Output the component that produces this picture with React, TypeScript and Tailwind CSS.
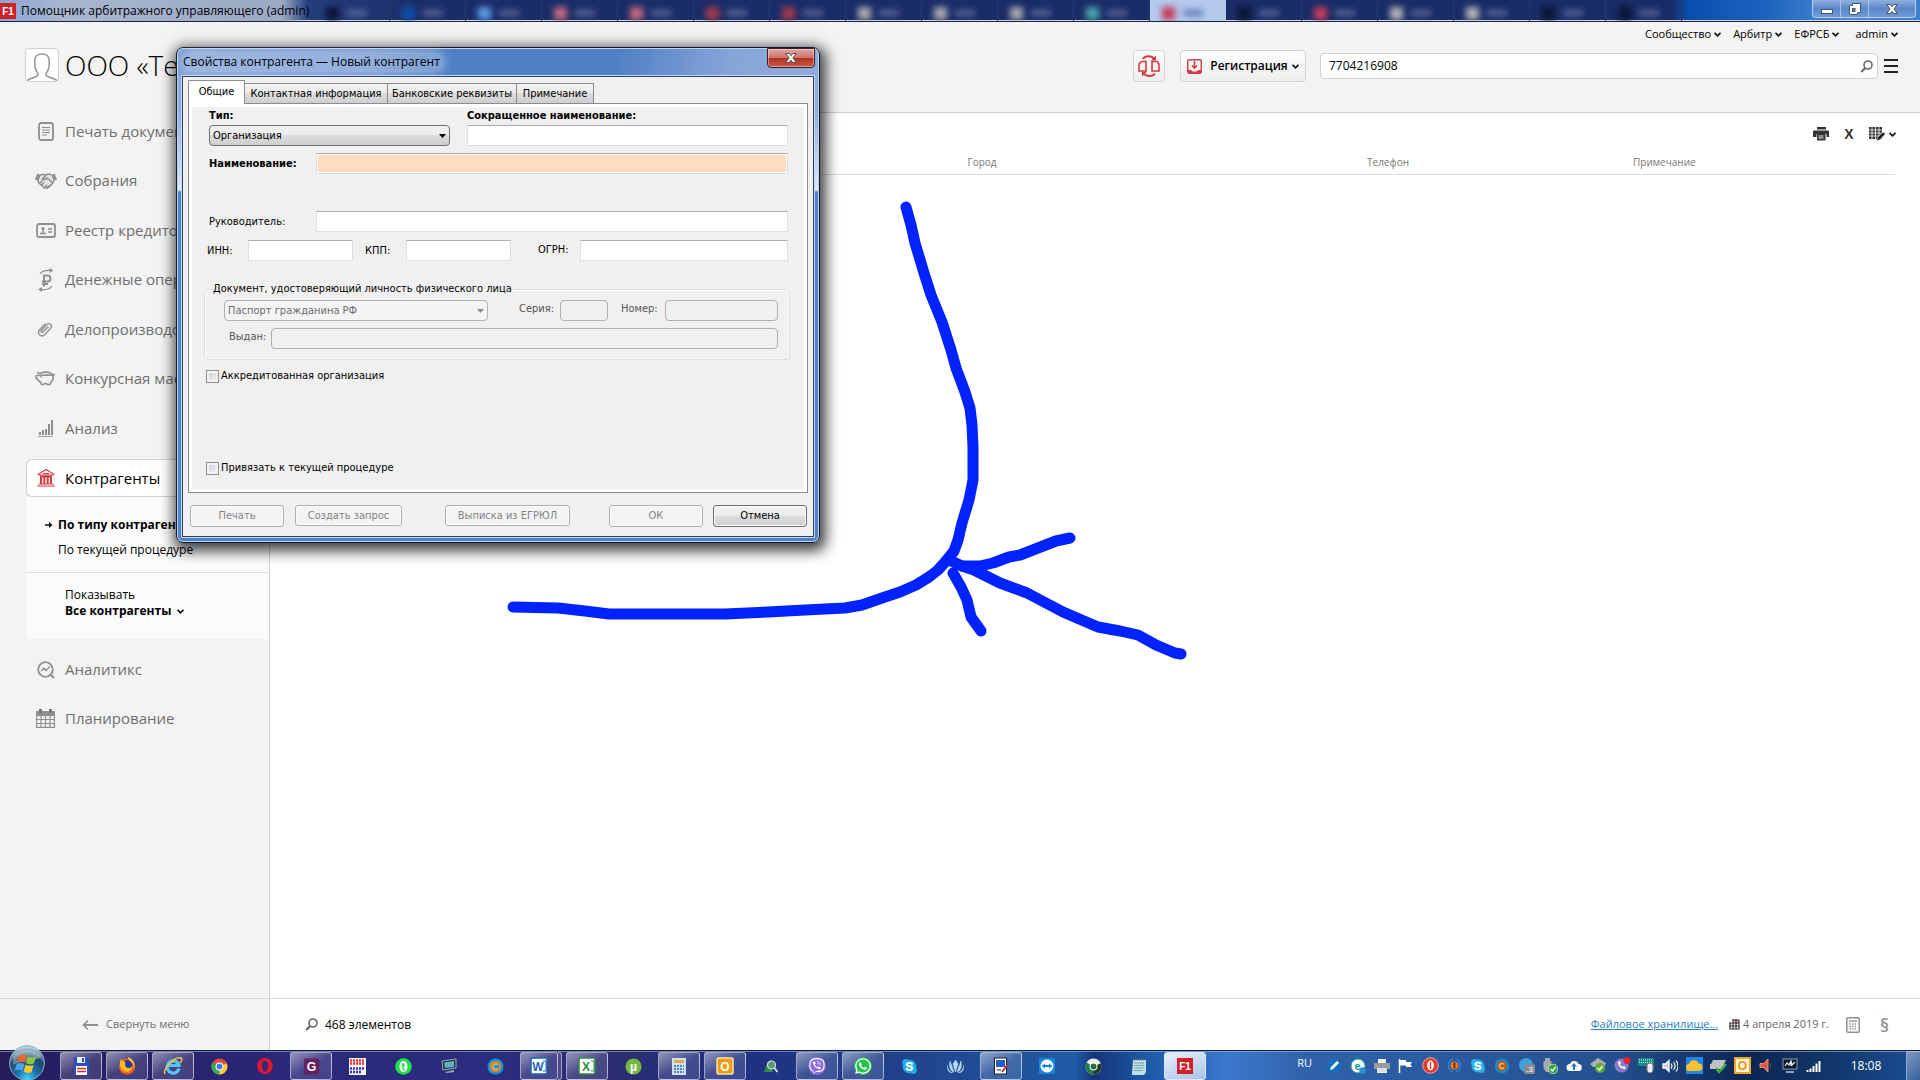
import React from "react";
import { FaHandshake, FaWhatsapp, FaViber, FaSkype } from "react-icons/fa";

const UI = "font-['Open_Sans','Noto_Sans',sans-serif]";
const DLG = "font-['DejaVu_Sans_Condensed','Open_Sans',sans-serif]";

type Kids = { children?: React.ReactNode };

function Ico({ w = 20, h = w, vb, children }: { w?: number; h?: number; vb?: string } & Kids) {
  return (
    <svg width={w} height={h} viewBox={vb ?? `0 0 ${w} ${h}`} fill="none" aria-hidden="true" className="shrink-0">
      {children}
    </svg>
  );
}

function Chevron() {
  return (
    <Ico w={7} h={5}>
      <path d="M0.5 0.8 L3.5 3.8 L6.5 0.8" stroke="#111" strokeWidth="1.7" />
    </Ico>
  );
}

function Lens({ size = 13 }: { size?: number }) {
  return (
    <Ico w={size} vb="0 0 13 13">
      <circle cx="8" cy="5" r="4" stroke="#666" strokeWidth="1.6" />
      <path d="M5.2 7.9 L1.2 12" stroke="#666" strokeWidth="2.2" />
    </Ico>
  );
}

/* ---------- title bar ---------- */

const browserTabs = [
  "bg-[#0a1535]", "bg-[#0d4fae]", "bg-[#5d9be6]", "bg-[#c4697b]", "bg-[#c4697b]", "bg-[#a33a4c]", "bg-[#a33a4c]",
  "bg-[#a9a7ae]", "bg-[#a9a7ae]", "bg-[#a9a7ae]", "bg-[#4ba5ac]", "bg-[#c43b5a]", "bg-[#0a1535]", "bg-[#c43b5a]",
  "bg-[#b3b1b5]", "bg-[#b3b1b5]", "bg-[#0a1535]", "bg-[#0a1535]",
];

function F1({ s = 16 }: { s?: number }) {
  return (
    <Ico w={s} vb="0 0 16 16">
      <rect width="16" height="16" fill="#cf2127" />
      <text x="8" y="12" textAnchor="middle" fontSize="10" fontWeight="bold" fontFamily="Liberation Sans" fill="#fff">F1</text>
    </Ico>
  );
}

function TitleBar() {
  return (
    <header className="flex h-[22px] shrink-0 items-stretch overflow-hidden border-b border-[#1c2340] bg-[linear-gradient(90deg,#3f69b5_0,#1b2d68_22%,#192c66_87%,#0a4fae_88%,#1d63bd_92%,#4a8ad4_96%,#3d7fd0_100%)] shadow-[inset_0_-1px_#cfd6e6]">
      <div className="flex w-[314px] shrink-0 items-center gap-[5px] bg-[linear-gradient(90deg,#8aa5d6_0,#a9b6d0_20%,#9ba8c4_90%,transparent_98%)] text-black">
        <F1 />
        <h1 className={`${UI} text-[12px] whitespace-nowrap`}>Помощник арбитражного управляющего (admin)</h1>
      </div>
      {browserTabs.map((c, i) => (
        <div key={i} className={`flex w-[76px] shrink items-end gap-2 px-3 pb-px ${i === 11 ? "bg-[#b5c9ec]" : "border-r border-[#24386f]"}`}>
          <span className={`size-[13px] blur-[3px] ${c}`} />
          <span className={`mb-1 h-[6px] w-5 blur-[3px] ${i === 11 ? "bg-[#5e7bb5]" : "bg-[#56669a]"}`} />
        </div>
      ))}
      <div className="mr-1 ml-auto flex h-[18px] rounded-b border border-t-0 border-[#b9cdec] bg-[linear-gradient(#8fb0df,#5c87c9_50%,#6e9ad8)]">
        <button aria-label="Свернуть" className="flex w-7 items-center justify-center border-r border-[#a8c0e6]">
          <Ico w={12} h={10}><rect x="0.5" y="5.5" width="11" height="4" fill="#fff" stroke="#45566f" /></Ico>
        </button>
        <button aria-label="Восстановить" className="flex w-7 items-center justify-center border-r border-[#a8c0e6]">
          <Ico w={12} h={12}>
            <path d="M3.5 0.5 H11.5 V9.5 H8.5 V11.5 H0.5 V2.5 H3.5Z" fill="#fff" stroke="#45566f" />
            <rect x="3.5" y="5.5" width="2.5" height="3" fill="#5c87c9" stroke="#45566f" />
          </Ico>
        </button>
        <button aria-label="Закрыть" className="flex w-[46px] items-center justify-center"><CrossGlyph /></button>
      </div>
    </header>
  );
}

function CrossGlyph() {
  return (
    <Ico w={12} h={10}>
      <path d="M0.7 0.5 H4 L6 2.8 L8 0.5 H11.3 L7.9 5 L11.3 9.5 H8 L6 7.2 L4 9.5 H0.7 L4.1 5Z" fill="#fff" stroke="#45464f" strokeWidth="0.9" />
    </Ico>
  );
}

/* ---------- sidebar ---------- */

const g = "#8f8f8f";
const navTop: { label: string; icon: React.ReactNode }[] = [
  { label: "Печать документов", icon: (
    <Ico w={16} h={19}><rect x="1" y="1" width="14" height="17" rx="2" stroke={g} strokeWidth="1.8" /><path d="M4 5.5h8M4 8h8M4 10.5h8M4 13h5" stroke={g} /></Ico>) },
  { label: "Собрания", icon: (
    <Ico w={22} h={18}><path d="M1 8 L3.500 2 M21 8 L18.500 2" stroke={g} strokeWidth="2.400" /><path d="M4.500 3.500 C7 1.500 9 2.500 11 3 C13 1.500 15.500 2 17.500 3.500 L19 8.500 L17.500 11.500 L12 16 H9.500 L3.500 10.500 L3 8.500Z" fill="#e2e2e2" stroke={g} strokeWidth="1.500" /><path d="M11 3 L7.500 7 C9 8.500 10.500 7.500 12 6 L18 11" stroke={g} strokeWidth="1.600" /><path d="M10 15l2-2M12 16.500l2.500-2.500M14 15l2.500-2M4.500 11l3-2.500M6.500 13l2.500-2.500" stroke={g} strokeWidth="1.600" /></Ico>) },
  { label: "Реестр кредиторов", icon: (
    <Ico w={20} h={15}><rect x="1" y="1" width="18" height="13" rx="2" stroke={g} strokeWidth="1.8" /><circle cx="7" cy="5.5" r="1.5" fill={g} /><path d="M4 10.5h6M7 6v4" stroke={g} strokeWidth="1.6" /><path d="M12 6h4M12 9h4" stroke={g} strokeWidth="1.3" /></Ico>) },
  { label: "Денежные операции", icon: (
    <Ico w={18} h={24}><path d="M3 6 C5 2.500 9 2 14 2.500 M15 18 C13 21.500 8 22 3 21.500" stroke={g} strokeWidth="1.200" /><path d="M12.500 0l4 2.500-4 2.500zM5 19l-4 2.500 4 2.500z" fill={g} /><path d="M7 18.500V7.500h3.500a2.800 2.800 0 010 6H5M5 16h6" stroke={g} strokeWidth="1.900" /></Ico>) },
  { label: "Делопроизводство", icon: (
    <Ico w={17} h={17} vb="0 0 17 17"><path d="M11.500 5.500 L6 11c-1 1-2.500-.3-1.500-1.500L10 3.500c2.500-2.200 6 .8 3.800 3.500L8 13.500c-3.500 3.500-8.500-.500-5.500-4.500L8.500 2.500" stroke={g} strokeWidth="1.400" /></Ico>) },
  { label: "Конкурсная масса", icon: (
    <Ico w={21} h={15}><path d="M2 1.500 L5 2.500 C9 .8 13 .8 16 2.500 L18.500 4 20 3.500 M17.500 4 C19 7 17.500 10 16 11 L15 13.500 H12 L11.500 12.500 H9.500 L9 13.500 H6.500 L5.500 11 C3.500 10.500 3 9 2.500 8 L1 7 V5 L2.500 4.500Z" stroke={g} strokeWidth="1.600" strokeLinejoin="round" /><path d="M9 4.500 C10.500 3.700 12 3.700 13.500 4.500" stroke={g} /><circle cx="6" cy="5.500" r=".9" fill={g} /></Ico>) },
  { label: "Анализ", icon: (
    <Ico w={15} h={17}><path d="M2 12v3M5 10v5M8 9v6M11 4v11M14 0v15" stroke={g} strokeWidth="2" /><path d="M0 16.500h15" stroke={g} strokeWidth=".8" /></Ico>) },
];

function NavRow({ label, icon, size }: { label: string; icon: React.ReactNode; size: string }) {
  return (
    <li>
      <a href="#" className={`flex items-center text-[#6f6f6f] ${size}`}>
        <span className="flex w-[39px] justify-center">{icon}</span>
        <span className="text-[15px] whitespace-nowrap">{label}</span>
      </a>
    </li>
  );
}

function Sidebar() {
  return (
    <nav className="flex w-[270px] shrink-0 flex-col border-r border-[#cfcfcf] bg-[#f3f3f3]">
      <ul className="flex h-[328px] flex-col justify-between pt-[7px] pl-[26px]">
        {navTop.map((n) => <NavRow key={n.label} size="h-6" {...n} />)}
      </ul>
      <div className="mt-[19px] flex-1 pl-[26px]">
        <a href="#" className="-mr-px flex h-[38px] items-center rounded-l-md border border-r-0 border-[#d3d3d3] bg-white text-black">
          <span className="flex w-[38px] justify-center">
            <Ico w={18} h={18}>
              <path d="M9 .5 L16.500 5 V6 H1.500 V5Z" stroke="#d63a42" strokeWidth="1.200" />
              <path d="M6 4.500h6" stroke="#d63a42" />
              <path d="M3 7.500h12M4 8v7M7.300 8v7M10.700 8v7M14 8v7" stroke="#d63a42" strokeWidth="2" />
              <path d="M1.500 15h15M0 17h18" stroke="#d63a42" strokeWidth="1.200" />
            </Ico>
          </span>
          <span className="text-[15px]">Контрагенты</span>
        </a>
        <div className="rounded-bl-md bg-[#fbfbfb] text-[12px] text-black">
          <div className="flex h-[76px] flex-col gap-[9px] border-b border-[#dcdcdc] pt-[20px]">
            <a href="#" className="flex items-center gap-[5px] pl-[19px] leading-4 font-bold whitespace-nowrap">
              <Ico w={8} h={8}><path d="M0 4h6" stroke="#111" strokeWidth="1.500" /><path d="M4 1l3.500 3L4 7z" fill="#111" /></Ico>
              По типу контрагентов
            </a>
            <a href="#" className="pl-[32px] leading-4">По текущей процедуре</a>
          </div>
          <div className="flex h-[66px] flex-col pt-[14px] pl-[39px]">
            <label htmlFor="show" className="leading-4">Показывать</label>
            <button id="show" className="flex items-center gap-[6px] leading-4 font-bold">Все контрагенты <Chevron /></button>
          </div>
        </div>
        <ul className="pt-[6px]">
          <NavRow size="h-[49px]" label="Аналитикс" icon={
            <Ico w={18} h={18}><circle cx="8.500" cy="8.500" r="7.300" stroke={g} strokeWidth="1.800" /><path d="M4 10l3-3 2 2.500L13 5.500" stroke={g} strokeWidth="1.300" /><path d="M13 13l4 4" stroke={g} strokeWidth="2.200" /></Ico>} />
          <NavRow size="h-[49px]" label="Планирование" icon={
            <Ico w={19} h={19}><path d="M0 2h19v5H0z" fill={g} /><path d="M4.500 0v4M14.500 0v4" stroke="#777" strokeWidth="3" /><path d="M.6 7v11.400h17.800V7M0 10.500h19M0 14.500h19M5 7v11M9.500 7v11M14 7v11" stroke={g} strokeWidth="1.200" /></Ico>} />
        </ul>
      </div>
      <button className="flex h-[52px] items-center gap-2 border-t border-[#dadada] pl-[82px] text-[11px] text-[#6f6f6f]">
        <Ico w={16} h={10}><path d="M2 5h14" stroke={g} strokeWidth="2" /><path d="M6 .5L1.500 5 6 9.500" stroke={g} strokeWidth="1.600" /></Ico>
        Свернуть меню
      </button>
    </nav>
  );
}

/* ---------- page header ---------- */

function PageHeader() {
  return (
    <div className="flex h-[90px] shrink-0 justify-between bg-[#f3f3f3] pr-[22px]">
      <div className="mt-[26px] flex h-[34px] items-center gap-[6px] pl-[25px]">
        <span className="flex h-[34px] w-[34px] items-end justify-center rounded border border-[#cfcfcf] bg-white">
          <Ico w={32} h={28}>
            <path d="M1 27.500 C5 24 11 25 12 22 C12.500 20 9 17 8.800 13 V7 C9 3 12 1 16 1 C20 1 23 3 23.200 7 V13 C23 17 19.500 20 20 22 C21 25 27 24 31 27.500" stroke="#9b9b9b" strokeWidth="1.600" />
          </Ico>
        </span>
        <h2 className="w-[112px] overflow-hidden text-[28px] leading-8 font-light whitespace-nowrap text-black">ООО «Те</h2>
      </div>
      <div className="flex w-[765px] flex-col gap-1">
        <div className="flex h-6 items-center justify-end gap-3 text-[11px] text-black">
          {["Сообщество", "Арбитр", "ЕФРСБ", "admin"].map((t, i) => (
            <button key={t} className={`flex items-center gap-[3px] ${i === 3 ? "ml-1" : ""}`}>{t} <Chevron /></button>
          ))}
        </div>
        <div className="flex items-center">
          <button aria-label="Обновить" className="flex h-8 w-8 items-center justify-center rounded border border-[#d4d4d4] bg-[linear-gradient(#fdfdfd,#ededed)]">
            <Ico w={22} h={22}>
              <path d="M3.500 6.500 H8 V16 H1 V9Z M14 6.500 H19 L21 9 V16 H14Z" stroke="#d63a42" strokeWidth="1.600" />
              <path d="M5 4 C7 .3 14 .3 16 4 M17 18.500 C15 21.800 8 21.800 6 18.500" stroke="#d63a42" strokeWidth="1.800" />
              <path d="M18 .5v5h-5zM4 21.500v-5h5z" fill="#d63a42" />
            </Ico>
          </button>
          <button className="ml-[15px] flex h-8 w-[126px] items-center justify-center gap-2 rounded border border-[#d4d4d4] bg-[linear-gradient(#fdfdfd,#ededed)] text-[12px] font-semibold text-black">
            <Ico w={15} h={15}>
              <rect x=".7" y=".7" width="13.600" height="13.600" rx="1.500" stroke="#d63a42" strokeWidth="1.400" />
              <path d="M7.500 2v7M5 6.500l2.500 2.500 2.500-2.500" stroke="#d63a42" strokeWidth="1.600" /><path d="M1 11h3l1.500 1.500h4L11 11h3v3H1z" fill="#d63a42" />
            </Ico>
            <span className="flex items-center gap-1">Регистрация <Chevron /></span>
          </button>
          <label className="ml-[14px] flex h-[26px] flex-1 items-center rounded border border-[#d0d0d0] bg-white pr-1 pl-2">
            <input aria-label="Поиск" defaultValue="7704216908" className="min-w-0 flex-1 bg-transparent text-[12px] text-black outline-none" />
            <Lens />
          </label>
          <button aria-label="Меню" className="ml-[6px] flex w-[14px] flex-col gap-[2px]">
            <span className="h-[2px] bg-[#222]" /><span className="mt-[2px] h-[2px] bg-[#222]" /><span className="mt-[2px] h-[2px] bg-[#222]" />
          </button>
        </div>
      </div>
    </div>
  );
}

/* ---------- main area ---------- */

function Main() {
  return (
    <main className="flex min-w-0 flex-1 flex-col border-t border-[#cdcdcd] bg-white">
      <div className="flex h-[42px] shrink-0 items-center justify-end gap-[14px] pr-[24px]">
        <button aria-label="Печать">
          <Ico w={16} h={14}><path d="M4 0h9v2.500H4z" fill="#333" /><path d="M1 3.500h14a1 1 0 011 1V10h-2.500V7h-10v3H0V4.500a1 1 0 011-1z" fill="#333" /><rect x="4" y="7" width="8.500" height="6.500" fill="#333" /><path d="M5.500 9h5M5.500 11h5" stroke="#fff" strokeWidth=".9" /></Ico>
        </button>
        <button aria-label="Экспорт в Excel" className="w-3 text-center font-['Liberation_Sans',sans-serif] text-[14px] leading-none font-bold text-[#333]">X</button>
        <button aria-label="Настроить таблицу" className="flex items-center gap-1">
          <Ico w={16} h={14}><path d="M0 0h13v12H0z" fill="#333" /><path d="M0 3h13M0 6h13M0 9h13M3 0v12M6.500 0v12M10 0v12" stroke="#fff" strokeWidth=".8" /><path d="M7.500 14l1-3.500L14 5l2.500 2L10.500 13z" fill="#222" stroke="#fff" strokeWidth=".6" /></Ico>
          <Chevron />
        </button>
      </div>
      <table className="mr-[25px] ml-[25px] table-fixed">
        <thead>
          <tr className="h-[19px] border-b border-[#dedede] align-top text-[10px] leading-[14px] text-[#777]">
            <td className="w-[30%]" />
            <th className="w-[25%] pl-[14px] font-normal">Город</th>
            <th className="w-[25%] pl-[26px] font-normal">Телефон</th>
            <th className="pl-[58px] text-left font-normal">Примечание</th>
          </tr>
        </thead>
      </table>
      <footer className="mt-auto flex h-[52px] items-center border-t border-[#dadada] pr-[31px] pl-[35px] text-[11px] text-black">
        <Lens />
        <span className="ml-[7px] text-[12px]">468 элементов</span>
        <a href="#" className="ml-auto text-[#2a80b9] underline">Файловое хранилище...</a>
        <span className="ml-[11px] flex items-center gap-[3px] text-[#666]">
          <Ico w={11} h={11}><rect x="5" y="1" width="5" height="4" fill="#f5b5b5" /><path d="M4 1h6v9H1V4M4 0v10M7 0v10M0 4h10M0 7h10" stroke="#333" strokeWidth="1.200" /></Ico>
          4 апреля 2019 г.
        </span>
        <button aria-label="Калькулятор" className="ml-[17px]">
          <Ico w={14} h={16}><rect x=".8" y=".8" width="12.400" height="14.400" rx="1" stroke={g} strokeWidth="1.500" /><path d="M3 4h8" stroke={g} strokeWidth="1.400" /><path d="M3.500 7h7M3.500 9.500h7M3.500 12h7" stroke={g} strokeWidth="1.400" strokeDasharray="1.400 1.200" /></Ico>
        </button>
        <span className="ml-5 text-[18px] leading-5 font-semibold text-[#8f8f8f]">§</span>
      </footer>
    </main>
  );
}

/* ---------- dialog ---------- */

const input = "h-[21px] min-w-0 rounded-[1px] border border-[#dbdfe6] border-t-[#a9acb2] bg-white px-1 outline-none";
const off = "h-[21px] min-w-0 rounded-sm border border-[#afafaf] bg-[#f0f0f0]";
const btn = "flex items-center justify-center rounded-[3px] border pt-px shadow-[inset_0_0_0_1px_#fbfbfb]";
const btnOff = "border-[#adb2b5] bg-[#f4f4f4] text-[#838383]";

function Pick({ id, text, disabled, className }: { id: string; text: string; disabled?: boolean; className: string }) {
  return (
    <span className={`relative flex h-[21px] items-center ${className}`}>
      <select id={id} disabled={disabled}
        className={`h-full w-full appearance-none rounded-sm border px-[3px] text-[11px] leading-none opacity-100 ${disabled ? "border-[#adb2b5] bg-[#f4f4f4] text-[#6d6d6d]" : "border-[#707070] bg-[linear-gradient(#f2f2f2,#ebebeb_49%,#dddddd_50%,#cfcfcf)] text-black"}`}>
        <option>{text}</option>
      </select>
      <span className="pointer-events-none absolute right-1">
        <Ico w={7} h={4}><path d="M0 0h7L3.500 4z" fill={disabled ? "#8a8a8a" : "#000"} /></Ico>
      </span>
    </span>
  );
}

function Check({ label }: { label: string }) {
  return (
    <label className="flex items-center gap-[2px]">
      <input type="checkbox" className="size-[13px] appearance-none border border-[#8e8f8f] bg-[linear-gradient(135deg,#c6cbd1,#f6f6f6)] shadow-[inset_0_0_0_2px_#f4f4f4]" />
      {label}
    </label>
  );
}

function Dialog() {
  return (
    <section role="dialog" aria-label="Свойства контрагента"
      className={`absolute top-[47px] left-[176px] flex w-[644px] flex-col rounded-[7px] border border-[#10182a] bg-[linear-gradient(#8eabdb_0,#8eabdb_60px,#e0e9f6_142px,#5181c5_144px)] px-[5px] pb-[5px] text-[11px] text-black shadow-[inset_0_0_0_1px_#bcd4f4,2px_4px_14px_4px_rgba(0,0,0,0.75)] ${DLG}`}>
      <div className="-mx-1 mt-px flex h-[27px] items-start justify-between rounded-t-md bg-[linear-gradient(100deg,#7e9fd6_0,#6f95d2_30%,#4f7fc4_42%,#4f7fc4_68%,#86a5d8_86%,#8eabdb_100%)] pl-[5px]">
        <h3 className={`mt-[3px] rounded-full bg-white/25 pr-1 text-[12px] leading-5 shadow-[0_0_8px_3px_rgba(255,255,255,0.25)] ${UI}`}>Свойства контрагента — Новый контрагент</h3>
        <button aria-label="Закрыть окно" className="-mt-px mr-[3px] flex h-[20px] w-[48px] items-center justify-center rounded-b-[4px] border border-[#431b22] bg-[linear-gradient(#e0a8a4,#cf7267_48%,#b0321f_50%,#c85a48_100%)] shadow-[inset_0_0_0_1px_rgba(255,255,255,0.4)]">
          <CrossGlyph />
        </button>
      </div>
      <div className="flex flex-col border border-[#2b4164] bg-[#f0f0f0] px-[5px] pt-[3px] pb-[9px] shadow-[0_0_0_1px_#c4daf6]">
        <div role="tablist" className="flex items-end">
          <button role="tab" aria-selected="true" className="relative z-10 -mb-px h-[24px] w-[57px] border border-b-0 border-[#898c95] bg-white pb-px">Общие</button>
          {[["Контактная информация", "w-[144px]"], ["Банковские реквизиты", "w-[130px]"], ["Примечание", "w-[78px]"]].map(([t, w]) => (
            <button key={t} role="tab" aria-selected="false" className={`-ml-px h-[20px] border border-b-0 border-[#898c95] bg-[linear-gradient(#f2f2f2,#ebebeb_49%,#dddddd_50%,#cfcfcf)] pt-px whitespace-nowrap ${w}`}>{t}</button>
          ))}
        </div>
        <div className="flex h-[390px] flex-col border border-[#898c95] bg-[#f0f0f0] pr-[19px] pl-[15px] shadow-[inset_0_0_0_3px_#fff]">
          <div className="mt-[4px] flex pl-[5px]">
            <div className="flex w-[258px] flex-col gap-px">
              <label htmlFor="type" className="leading-4 font-bold">Тип:</label>
              <Pick id="type" text="Организация" className="w-[241px]" />
            </div>
            <div className="flex flex-1 flex-col gap-px">
              <label htmlFor="short" className="leading-4 font-bold">Сокращенное наименование:</label>
              <input id="short" className={input} />
            </div>
          </div>
          <div className="mt-[7px] flex items-center pl-[5px]">
            <label htmlFor="name" className="w-[107px] pt-px font-bold">Наименование:</label>
            <input id="name" className="h-[21px] min-w-0 flex-1 border border-[#dbdfe6] border-t-[#a9acb2] bg-[#ffdbc2] shadow-[inset_0_0_0_1px_#fff]" />
          </div>
          <div className="mt-[37px] flex items-center pl-[5px]">
            <label htmlFor="head" className="w-[107px] pt-px">Руководитель:</label>
            <input id="head" className={`flex-1 ${input}`} />
          </div>
          <div className="mt-2 flex items-center pl-[3px]">
            <label htmlFor="inn" className="w-[41px] pt-[2px]">ИНН:</label>
            <input id="inn" className={`w-[105px] ${input}`} />
            <label htmlFor="kpp" className="ml-3 w-[41px] pt-[2px]">КПП:</label>
            <input id="kpp" className={`w-[105px] ${input}`} />
            <label htmlFor="ogrn" className="ml-[27px] w-[42px]">ОГРН:</label>
            <input id="ogrn" className={`flex-1 ${input}`} />
          </div>
          <fieldset className="-mr-[2px] mt-[20px] flex h-[79px] min-w-0 flex-col rounded border border-[#d5dfe5] pr-[11px] pl-[19px] shadow-[inset_0_0_0_1px_#fafafa]">
            <legend className="-ml-[13px] px-[2px] leading-4">Документ, удостоверяющий личность физического лица</legend>
            <div className="mt-[3px] flex items-center text-[#555]">
              <Pick id="doc" text="Паспорт гражданина РФ" disabled className="w-[264px]" />
              <label htmlFor="ser" className="ml-[31px] w-[41px] pb-[3px]">Серия:</label>
              <input id="ser" disabled className={`w-[48px] ${off}`} />
              <label htmlFor="num" className="ml-[13px] w-[44px] pb-[3px]">Номер:</label>
              <input id="num" disabled className={`flex-1 ${off}`} />
            </div>
            <div className="mt-[7px] flex items-center pl-[5px] text-[#555]">
              <label htmlFor="given" className="w-[42px] pb-[3px]">Выдан:</label>
              <input id="given" disabled className={`flex-1 ${off}`} />
            </div>
          </fieldset>
          <div className="mt-[8px] flex flex-col gap-[76px] pl-[2px] leading-4">
            <Check label="Аккредитованная организация" />
            <Check label="Привязать к текущей процедуре" />
          </div>
        </div>
        <div className="mt-[12px] flex items-start pl-[2px]">
          <button disabled className={`h-[22px] w-[94px] ${btn} ${btnOff}`}>Печать</button>
          <button disabled className={`ml-[11px] h-[21px] w-[107px] ${btn} ${btnOff}`}>Создать запрос</button>
          <button disabled className={`ml-[43px] h-[21px] w-[125px] ${btn} ${btnOff}`}>Выписка из ЕГРЮЛ</button>
          <button disabled className={`ml-auto h-[22px] w-[94px] ${btn} ${btnOff}`}>ОК</button>
          <button className={`mr-px ml-[10px] h-[22px] w-[94px] ${btn} border-[#707070] bg-[linear-gradient(#f2f2f2,#ebebeb_49%,#dddddd_50%,#cfcfcf)]`}>Отмена</button>
        </div>
      </div>
    </section>
  );
}

function Pointer() {
  return (
    <svg className="pointer-events-none absolute top-[190px] left-[500px]" width="700" height="480" viewBox="500 190 700 480" fill="none" stroke="#0022ff" strokeWidth="11" strokeLinecap="round" strokeLinejoin="round" aria-hidden="true">
      <path d="M906 207 L911 225 L915 243 L924 273 L931 295 L942 322 L951 350 L956 368 L965 392 L970 408 L972 425 L973 447 V480 L969 500 L962 523 L958 540 L954 551 L946 561 L938 570 L929 577 L916 585 L900 592 L882 598 L862 605 L845 608 L805 610 L768 612 L725 614 H609 L585 611 L558 608 L513 607" />
      <path d="M949 560 L962 566 H980 L993 563 L1009 557 L1020 555 L1056 541 L1070 538" />
      <path d="M962 566 L974 570 L1000 583 L1027 593 L1063 612 L1098 627 L1120 631 L1138 635 L1156 645 L1175 653 L1181 654" />
      <path d="M953 573 L961 587 L967 600 L971 617 L981 631" />
    </svg>
  );
}

/* ---------- taskbar ---------- */

function Tile({ bg, fg = "#fff", ch, s = 18, round }: { bg: string; fg?: string; ch: string; s?: number; round?: boolean }) {
  return (
    <Ico w={s} vb="0 0 18 18">
      {round ? <circle cx="9" cy="9" r="8.500" fill={bg} /> : <rect x="1" y="0.500" width="16" height="17" rx="1.500" fill={bg} />}
      <text x="9" y="13.500" textAnchor="middle" fontSize="13" fontWeight="bold" fontFamily="Liberation Sans" fill={fg}>{ch}</text>
    </Ico>
  );
}

function Office({ c, ch, solid }: { c: string; ch: string; solid?: boolean }) {
  return (
    <Ico w={18} h={18}>
      <rect x="1" y="1" width="16" height="16" rx="1.500" fill={solid ? c : "#fff"} stroke={solid ? "#fbe3ae" : c} strokeWidth="1.500" />
      {!solid && <path d="M13 4h3v10h-3" stroke={c} />}
      <text x={solid ? 9 : 8} y="13.500" textAnchor="middle" fontSize="12" fontWeight="bold" fontFamily="Liberation Sans" fill={solid ? "#fff" : c}>{ch}</text>
    </Ico>
  );
}

const Skype = ({ size, color }: { size: number; color: string }) => (
  <span className="rounded-full bg-[radial-gradient(#fff_50%,transparent_51%)]"><FaSkype size={size} color={color} /></span>
);

const Chrome = ({ a, b, c, d }: { a: string; b: string; c: string; d: string }) => (
  <Ico w={17} h={17} vb="0 0 16 16">
    <circle cx="8" cy="8" r="7.500" fill={a} />
    <path d="M8 8 L1.500 4.200 A7.500 7.500 0 008 15.500 L11 10Z" fill={b} />
    <path d="M8 8 L14.800 5 A7.500 7.500 0 018 15.500Z" fill={c} />
    <circle cx="8" cy="8" r="3.700" fill="#fff" /><circle cx="8" cy="8" r="2.800" fill={d} />
  </Ico>
);

const apps: { name: string; on?: boolean; active?: boolean; stacked?: boolean; icon: React.ReactNode }[] = [
  { name: "Сохранение", on: true, icon: <Ico w={16} h={18}><path d="M1 0h12l3 3v15H1z" fill="#2a4fc4" /><path d="M4 0h8v6H4z" fill="#e8ecf5" /><path d="M9 1h2v4H9z" fill="#2a4fc4" /><path d="M3 9h11v9H3z" fill="#fff" /><path d="M4 11.500h9M4 14.500h9" stroke="#d9302c" strokeWidth="1.500" /></Ico> },
  { name: "Firefox", on: true, icon: <Ico w={18} h={18}><circle cx="9" cy="9.500" r="8" fill="#f0641e" /><circle cx="9.500" cy="8" r="5" fill="#2b3a9a" /><path d="M3 2c1 2 3 2 4 3s-1 3 1 5 5 1 6-1c0 5-4 7-8 5S1 6 3 2z" fill="#ffbf1f" /><path d="M10 0c5 2 8 7 6 12 0-5-2-6-4-8s-2-2-2-4z" fill="#ffc52e" /></Ico> },
  { name: "Internet Explorer", on: true, icon: <Ico w={20} h={20}><path d="M16 12.500A6 6 0 1116 9.500H5" stroke="#53c3f3" strokeWidth="3.200" /><path d="M2 18C-1 14 12 0 18 2c2 1 0 4-1 5" stroke="#f2c53d" strokeWidth="1.500" /></Ico> },
  { name: "Chrome", icon: <Chrome a="#e0483a" b="#38a852" c="#f7cb3d" d="#3f7fe0" /> },
  { name: "Opera", icon: <Ico w={16} h={16}><ellipse cx="8" cy="8" rx="7.800" ry="8" fill="#e0182d" /><ellipse cx="8" cy="8" rx="3" ry="5.500" fill="#2b2a7e" /></Ico> },
  { name: "Гарант", on: true, icon: <Tile bg="#64205f" ch="G" s={17} /> },
  { name: "Календарь", icon: <Ico w={17} h={17}><rect width="17" height="17" fill="#f4f4f6" /><path d="M1 2.500h15M1 5.500h15" stroke="#e33" strokeWidth="2.400" strokeDasharray="2 1" /><path d="M1 10.500h15M1 14h12" stroke="#33b" strokeWidth="2.400" strokeDasharray="2 1" /></Ico> },
  { name: "Телефон", icon: <Ico w={17}><circle cx="8.500" cy="8.500" r="8.300" fill="#1fe04a" /><ellipse cx="8.500" cy="8.500" rx="4" ry="5.500" fill="#fff" /><path d="M8 5v5.500c0 1 1 1.500 2 1M6.500 7h3.500" stroke="#1fe04a" strokeWidth="1.500" /></Ico> },
  { name: "Удалённый доступ", icon: <Ico w={16} h={16}><path d="M1 3l14-2v9L2 12z" fill="#23343c" stroke="#9ab" /><path d="M3 4.500l10-1.500v6L4 10z" fill="#5fb2c4" /><path d="M4 14l9-2v2l-7 1z" fill="#9ab" /></Ico> },
  { name: "C", icon: <Ico w={17} h={17}><circle cx="8.500" cy="8.500" r="8" fill="#1993d6" /><circle cx="8.500" cy="8.500" r="4.500" stroke="#f08a1d" strokeWidth="2" /><path d="M10.500 7a2.500 2.500 0 100 3" stroke="#f6b03a" strokeWidth="1.500" /></Ico> },
  { name: "Word", on: true, stacked: true, icon: <Office c="#1f62b8" ch="W" /> },
  { name: "Excel", on: true, icon: <Office c="#2c8a3e" ch="X" /> },
  { name: "uTorrent", icon: <Tile bg="#76b83f" ch="µ" round s={17} /> },
  { name: "Калькулятор", on: true, icon: <Ico w={14} h={17}><rect width="14" height="17" fill="#cfe2f5" /><path d="M2 2h10v3H2z" fill="#f0a640" /><path d="M2 8h10M2 11h10M2 14h10" stroke="#4b86c4" strokeWidth="1.800" strokeDasharray="2 1" /></Ico> },
  { name: "Outlook", on: true, icon: <Office c="#ee9a13" ch="O" solid /> },
  { name: "Поиск", icon: <Ico w={16} h={16}><path d="M1 14L5 3l5 11z" fill="#2f8f4a" /><circle cx="8.500" cy="7" r="4" fill="#4f9f70" stroke="#dde" strokeWidth="1.200" /><path d="M11.500 10l3 4" stroke="#dde" strokeWidth="1.800" /></Ico> },
  { name: "Viber", on: true, icon: <span className="rounded-full bg-[#8a6be0] p-px text-white"><FaViber size={16} /></span> },
  { name: "WhatsApp", on: true, icon: <span className="rounded-full bg-[#22c24b] text-white"><FaWhatsapp size={18} /></span> },
  { name: "Skype", icon: <Skype size={17} color="#18aef0" /> },
  { name: "Лотос", icon: <Ico w={17} h={13}><path d="M8.500 0l2.500 4-2.500 8L6 4zM3 1l4 11C3 11 2 6 3 1zM14 1l-4 11c4-1 5-6 4-11zM0 5c1 5 3 7 6 8-4 0-6-3-6-8zM17 5c-1 5-3 7-6 8 4 0 6-3 6-8z" fill="#b9dcfb" stroke="#b9dcfb" strokeWidth=".5" /></Ico> },
  { name: "Редактор", on: true, icon: <Ico w={16} h={18}><rect x="1.500" y="1" width="12" height="16" fill="#fff" stroke="#222" /><path d="M3 3h9v7H3z" fill="#2a5bc4" /><path d="M9 15l6-8" stroke="#b33" strokeWidth="1.800" /><path d="M4 13h4" stroke="#222" /></Ico> },
  { name: "TeamViewer", icon: <Ico w={16} h={16}><rect width="16" height="16" rx="1" fill="#1287e0" /><circle cx="8" cy="8" r="6.500" fill="#fff" /><path d="M2.500 8L6 5.500v1.500h4V5.500L13.500 8 10 10.500V9H6v1.500z" fill="#1287e0" /></Ico> },
  { name: "Браузер", icon: <Chrome a="#e9eee9" b="#1f7c46" c="#223a2c" d="#2d6b45" /> },
  { name: "Блокнот", icon: <Ico w={16} h={17}><path d="M2 2h13v12l-2 3H1z" fill="#bfe0e4" /><path d="M3 5h10M3 7.500h10M3 10h10M3 12.500h9" stroke="#78a7b0" /><path d="M2 1.500h13" stroke="#667" strokeWidth="2" strokeDasharray="1 1" /></Ico> },
  { name: "Помощник арбитражного управляющего", on: true, active: true, icon: <F1 /> },
];

const tray: React.ReactNode[] = [
  <Ico w={16}><circle cx="8" cy="8" r="7" fill="#1470b8" /><path d="M4 12l1-3 6-6 2 2-6 6z" fill="#fff" /></Ico>,
  <Ico w={16}><circle cx="8" cy="8" r="7" fill="#fff" stroke="#16a39a" /><text x="7.500" y="12" textAnchor="middle" fontSize="11" fontWeight="bold" fontFamily="Liberation Sans" fill="#0d9a90">e</text><circle cx="12.500" cy="12.500" r="3.200" fill="#2592d8" /></Ico>,
  <Ico w={16}><path d="M4 1h8v5H4zM3 10h10v5H3z" fill="#f2f2f2" /><path d="M0 5h16v6H0z" fill="#9a9a9f" /><path d="M3 10h10v4H3z" fill="#ddd" /></Ico>,
  <Ico w={16}><path d="M1.500 1v14" stroke="#fff" strokeWidth="1.500" /><path d="M2 2h6v2h6l-1.500 2.500L14 9H8V7.500H2z" fill="#fff" /></Ico>,
  <Ico w={17} h={17}><circle cx="8.500" cy="8.500" r="7.800" fill="#e83a24" stroke="#f6c9c2" strokeWidth=".8" /><ellipse cx="8.500" cy="8.500" rx="3.300" ry="5" fill="#fff" /><path d="M8.500 5v7" stroke="#e83a24" strokeWidth="1.500" /></Ico>,
  <Ico w={15}><path d="M9 1a7 7 0 010 13M6 1a7 7 0 000 13" stroke="#2f79d8" strokeWidth="1.600" /><circle cx="7.500" cy="7.500" r="4" fill="#e87722" /><path d="M7.500 4.500v6" stroke="#3b2a22" strokeWidth="1.600" /></Ico>,
  <Skype size={16} color="#27b3f2" />,
  <Ico w={16}><circle cx="8" cy="8" r="7.500" fill="#1c86c8" /><circle cx="8" cy="8" r="5" fill="#b8601e" /><path d="M10 6.500a2.500 2.500 0 100 3" stroke="#f5b35a" strokeWidth="1.500" /></Ico>,
  <Ico w={17} h={16}><circle cx="8" cy="7" r="7" fill="#3ba2dc" /><rect x="6" y="6" width="11" height="10" rx="2" fill="#8a8c90" /><text x="11.500" y="14" textAnchor="middle" fontSize="8" fontFamily="Liberation Sans" fill="#fff">.3</text></Ico>,
  <Ico w={16}><path d="M3 0h5v3h1.500v7L7 14H4L1.500 10V3H3z" fill="#a9a9ad" /><circle cx="11" cy="11" r="4.800" fill="#2fa83a" stroke="#fff" strokeWidth=".6" /><path d="M8.500 11l2 2 3-4" stroke="#fff" strokeWidth="1.400" /></Ico>,
  <Ico w={16}><path d="M4 13a3.500 3.500 0 010-7 4.500 4.500 0 018.500 0A3.500 3.500 0 0112 13z" fill="#fff" /><path d="M8 5l3 3.500H9V12H7V8.500H5z" fill="#2f6fd0" /></Ico>,
  <Ico w={17}><path d="M0 7l8-6 8 5-2 4H3z" fill="#a9b0b2" /><circle cx="10" cy="11" r="5" fill="#5cae2e" /><path d="M7.500 11l2 2 3-4" stroke="#fff" strokeWidth="1.400" /></Ico>,
  <Ico w={17}><circle cx="7.500" cy="8.500" r="7" fill="#8a7bc8" /><path d="M4 5c0 4 3 7 7 7l.5-2-2-1-1 .8C7 9 6 8 6 7l1-1-1-2z" fill="#fff" /><circle cx="13" cy="3.500" r="3.500" fill="#e8222e" /></Ico>,
  <Ico w={17}><path d="M0 1h16v8H0z" fill="#1b8a86" /><path d="M1 3h14M1 5.500h14" stroke="#cfe" strokeDasharray="1 1" /><rect x="9" y="6" width="6" height="10" rx="3" fill="#eee" stroke="#777" /></Ico>,
  <Ico w={16}><path d="M1 6h2.500L7 2.500v11L3.500 10H1z" stroke="#fff" strokeWidth="1.300" fill="#ccd" /><path d="M9 5.500a4 4 0 010 5M11.500 4a6.500 6.500 0 010 8M14 2.500a9 9 0 010 11" stroke="#fff" strokeWidth="1.200" /></Ico>,
  <Ico w={17}><rect width="17" height="17" fill="#1e86ec" /><path d="M3.500 14a3.500 3.500 0 01-.5-7 5 5 0 019.500-.500A3.800 3.800 0 0113.500 14z" fill="#ffc02e" /></Ico>,
  <Ico w={17}><path d="M3 3h13l-2 4H1zM0 7h14v5H0z" fill="#bfc1c4" /><path d="M6 11l3 4 7-8" stroke="#3fae3a" strokeWidth="2.400" /></Ico>,
  <Ico w={17}><rect width="17" height="17" fill="#f2a81d" /><rect x="2" y="2" width="13" height="13" fill="#fff4d8" /><text x="8.500" y="13" textAnchor="middle" fontSize="12" fontWeight="bold" fontFamily="Liberation Sans" fill="#e8940c">O</text></Ico>,
  <Ico w={15}><path d="M1 5.500h3.500L9 1v13l-4.500-4.500H1z" fill="#e0563a" stroke="#f3b09e" strokeWidth=".8" /><path d="M11.500 5v5" stroke="#8a3a30" /></Ico>,
  <Ico w={16}><rect x="1" y="1" width="14" height="10" fill="#0c1524" stroke="#8ea0b8" /><path d="M3 8l2-3 2 2 2-4 1 4 3-3M9 3v5" stroke="#dfe8f5" strokeWidth="1.300" /><path d="M4 13h8v2H4z" fill="#8ea0b8" /></Ico>,
  <Ico w={16} h={14}><path d="M1.500 11v2M4.500 9.500V13M7.500 7v6M10.500 4.500V13M13.500 2v11" stroke="#fff" strokeWidth="2" /></Ico>,
];

const frameOn = "border border-white/50 bg-[linear-gradient(150deg,rgba(255,255,255,0.5),rgba(255,255,255,0.15)_50%,rgba(255,255,255,0.12))]";
const frameActive = "border border-[#dbe8fb] bg-[linear-gradient(160deg,#e8effa,#a9c3ea)]";

function Taskbar() {
  return (
    <footer className="relative flex h-[30px] shrink-0 border-t border-[#0d1b30] bg-[linear-gradient(90deg,#251c5c_0,#2a2878_15%,#2b2d80_25%,#2b2c70_32%,#1f2f80_38%,#21448c_48%,#1f5ba6_56%,#143578_57%,#1d5cab_60%,#3c78cc_64%,#2f62ab_68%,#24508f_84%,#0c2552_91%,#12396f_96%,#1c4f94_100%)] shadow-[inset_0_1px_rgba(180,200,235,0.55)]">
      <button aria-label="Пуск" className="-mt-[6px] ml-[9px] size-[36px] shrink-0">
        <Ico w={36} h={36}>
          <defs>
            <radialGradient id="orb" cx="50%" cy="95%" r="90%"><stop offset="0" stopColor="#3fd6ff" /><stop offset=".35" stopColor="#1c6fa8" /><stop offset=".7" stopColor="#1b4668" /><stop offset="1" stopColor="#b9d2dc" /></radialGradient>
          </defs>
          <circle cx="18" cy="18" r="17.300" fill="url(#orb)" stroke="#8fb4c8" strokeWidth="1" />
          <path d="M4 12C8 3 28 3 32 12 26 17 12 15 4 20z" fill="#fff" opacity=".3" />
          <path d="M10 11c3-2 5-1.500 7.500-.2L16 17.500c-2.500-1.300-5-1.500-8 0z" fill="#f0642a" />
          <path d="M18.700 11.500c3 1.500 5 1.500 8.300-.3l-2 7c-3 1.600-5 1.300-8 0z" fill="#8cc63e" />
          <path d="M7.600 19c3-1.500 5.300-1 7.800 0l-1.800 6.700c-2.500-1.200-5-1.200-8 .3z" fill="#4aa3e8" />
          <path d="M16.600 19.700c3 1.300 5 1.500 8 .2l-2 7c-3 1.500-5 1.200-8-.3z" fill="#fbc62c" />
        </Ico>
      </button>
      <div className="ml-[15px] flex gap-1 pt-px">
        {apps.map((a) => (
          <span key={a.name} className="flex h-[28px] w-[42px]">
            <button aria-label={a.name} className={`flex flex-1 items-center justify-center rounded-[3px] ${a.active ? frameActive : a.on ? frameOn : ""}`}>
              {a.icon}
            </button>
            {a.stacked && <span className="w-1 rounded-r-[3px] border border-l-0 border-white/50 bg-white/15" />}
          </span>
        ))}
      </div>
      <div className={`ml-auto flex items-center text-[12px] text-white ${UI}`}>
        <span className="mr-[10px] pb-1 text-[11px]">RU</span>
        {tray.map((t, i) => <span key={i} className="flex w-6 justify-center">{t}</span>)}
        <time className="w-[80px] text-center">18:08</time>
        <button aria-label="Показать рабочий стол" className="h-full w-[14px] border-l border-[#8aa9d6] bg-[linear-gradient(135deg,rgba(255,255,255,0.45),rgba(255,255,255,0.1))]" />
      </div>
    </footer>
  );
}

export default function App() {
  return (
    <div className={`relative flex h-screen flex-col overflow-hidden bg-white ${UI}`}>
      <TitleBar />
      <PageHeader />
      <div className="flex min-h-0 flex-1">
        <Sidebar />
        <Main />
      </div>
      <Taskbar />
      <Dialog />
      <Pointer />
    </div>
  );
}
